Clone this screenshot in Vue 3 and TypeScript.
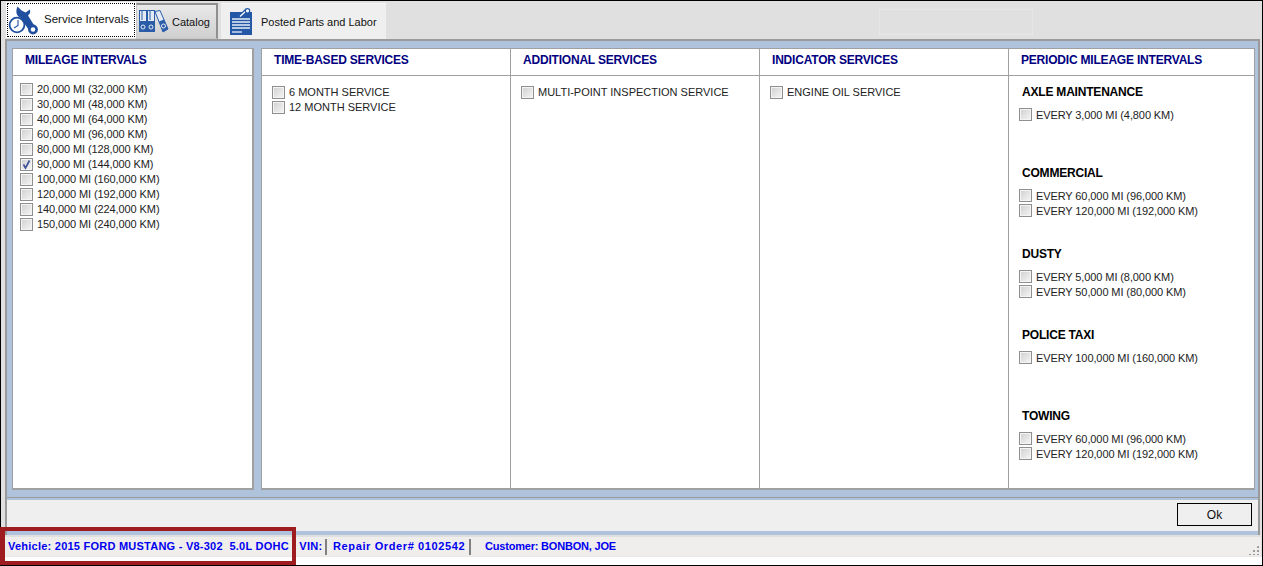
<script setup lang="ts">
interface Group { title: string; rows: string[] }
const mileage: { label: string; checked?: boolean }[] = [
  { label: '20,000 MI (32,000 KM)' },
  { label: '30,000 MI (48,000 KM)' },
  { label: '40,000 MI (64,000 KM)' },
  { label: '60,000 MI (96,000 KM)' },
  { label: '80,000 MI (128,000 KM)' },
  { label: '90,000 MI (144,000 KM)', checked: true },
  { label: '100,000 MI (160,000 KM)' },
  { label: '120,000 MI (192,000 KM)' },
  { label: '140,000 MI (224,000 KM)' },
  { label: '150,000 MI (240,000 KM)' },
]
const columns: { title: string; rows: string[] }[] = [
  { title: 'TIME-BASED SERVICES', rows: ['6 MONTH SERVICE', '12 MONTH SERVICE'] },
  { title: 'ADDITIONAL SERVICES', rows: ['MULTI-POINT INSPECTION SERVICE'] },
  { title: 'INDICATOR SERVICES', rows: ['ENGINE OIL SERVICE'] },
]
const groups: Group[] = [
  { title: 'AXLE MAINTENANCE', rows: ['EVERY 3,000 MI (4,800 KM)'] },
  { title: 'COMMERCIAL', rows: ['EVERY 60,000 MI (96,000 KM)', 'EVERY 120,000 MI (192,000 KM)'] },
  { title: 'DUSTY', rows: ['EVERY 5,000 MI (8,000 KM)', 'EVERY 50,000 MI (80,000 KM)'] },
  { title: 'POLICE TAXI', rows: ['EVERY 100,000 MI (160,000 KM)'] },
  { title: 'TOWING', rows: ['EVERY 60,000 MI (96,000 KM)', 'EVERY 120,000 MI (192,000 KM)'] },
]
const vehicle = 'Vehicle: 2015 FORD MUSTANG - V8-302  5.0L DOHC - VIN:'
</script>

<template>
  <div class="window">
    <div class="tabbar">
      <div class="tab tab-active">
        <div class="focus">
          <svg class="ico" width="32" height="32" viewBox="0 0 32 32">
            <path d="M9.5 2.5 C7 8 9 12.5 12.5 13.5 L20.5 25.5 L26.5 22 L20 11.5 C22 10 22.5 8 22 5.5 L17.5 8.5 L13.5 6.5 Z" fill="#1f4f9e" />
            <circle cx="25" cy="25.5" r="3.6" fill="#fff" stroke="#1f4f9e" stroke-width="2.6" />
            <circle cx="9" cy="21" r="7.4" fill="#fff" stroke="#1f4f9e" stroke-width="1.8" />
            <path d="M10 16 V21.5 L6 24" fill="none" stroke="#1f4f9e" stroke-width="1.1" />
          </svg>
          <span class="tab-text service-text">Service Intervals</span>
        </div>
      </div>
      <div class="tab tab-catalog">
        <svg class="ico" width="30" height="23" viewBox="0 0 30 23">
          <g fill="#e4ebf5" stroke="#2a5ca8" stroke-width="1">
            <rect x="0.5" y="0.5" width="7" height="21" />
            <rect x="8.5" y="0.5" width="7" height="21" />
            <path d="M16 1.5 L21 0.5 L29 19 L24 22 Z" />
          </g>
          <rect x="0" y="11" width="8" height="11" fill="#2a5ca8" />
          <rect x="8" y="11" width="8" height="11" fill="#2a5ca8" />
          <path d="M20 11.5 L25 9.5 L29 19 L24 22 Z" fill="#2a5ca8" />
          <path d="M3 1 V10 M11 1 V10" stroke="#2a5ca8" stroke-width="1" />
          <circle cx="4" cy="17" r="2" fill="#2a5ca8" stroke="#e4ebf5" stroke-width="1" />
          <circle cx="12" cy="17" r="2" fill="#2a5ca8" stroke="#e4ebf5" stroke-width="1" />
          <circle cx="24.5" cy="16" r="2" fill="#2a5ca8" stroke="#e4ebf5" stroke-width="1" />
        </svg>
        <span class="tab-text catalog-text">Catalog</span>
      </div>
      <div class="tab tab-posted">
        <svg class="ico" width="23" height="28" viewBox="0 0 23 28">
          <rect x="0" y="4" width="22" height="23" fill="#2458a6" />
          <path d="M9 9.5 L17 1.5" stroke="#2458a6" stroke-width="3.4" />
          <path d="M10 8.5 L17 2" stroke="#fff" stroke-width="1.3" />
          <circle cx="17.5" cy="2.8" r="2.2" fill="#fff" stroke="#2458a6" stroke-width="1.2" />
          <path d="M2 11 H20 M2 14 H20 M2 17 H20 M2 20 H20" stroke="#e8eef8" stroke-width="1.3" />
          <path d="M2 24 H12" stroke="#e8eef8" stroke-width="1.3" />
        </svg>
        <span class="tab-text posted-text">Posted Parts and Labor</span>
      </div>
      <div class="ghost"></div>
    </div>

    <div class="frame">
      <div class="panels">
        <section class="card card-mileage">
          <h2 class="head">MILEAGE INTERVALS</h2>
          <div class="list list-mileage">
            <label v-for="m in mileage" :key="m.label" class="row">
              <span class="box" :class="{ on: m.checked }">
                <svg v-if="m.checked" width="11" height="11" viewBox="0 0 11 11"><path d="M2.5 5.5 L4.5 9 L8.5 1.5" fill="none" stroke="#3b4f9a" stroke-width="1.6" /></svg>
              </span>
              <span>{{ m.label }}</span>
            </label>
          </div>
        </section>
        <section class="card card-services">
          <div v-for="c in columns" :key="c.title" class="col">
            <h2 class="head">{{ c.title }}</h2>
            <div class="list list-col">
              <label v-for="r in c.rows" :key="r" class="row"><span class="box"></span><span>{{ r }}</span></label>
            </div>
          </div>
          <div class="col col-last">
            <h2 class="head">PERIODIC MILEAGE INTERVALS</h2>
            <div class="groups">
              <div v-for="g in groups" :key="g.title" class="group">
                <h3 class="group-title">{{ g.title }}</h3>
                <label v-for="r in g.rows" :key="r" class="row"><span class="box"></span><span>{{ r }}</span></label>
              </div>
            </div>
          </div>
        </section>
      </div>
      <div class="footer">
        <button class="ok" type="button">Ok</button>
      </div>
    </div>

    <div class="status">
      <span class="st st-vehicle">{{ vehicle }}</span>
      <span class="st st-order">Repair Order# 0102542</span>
      <span class="st st-customer">Customer: BONBON, JOE</span>
      <span class="grip"></span>
    </div>
    <div class="bottom"></div>
    <div class="callout"></div>
  </div>
</template>

<style>
html, body { margin: 0; padding: 0; background: #fff; }
</style>

<style scoped>
.window {
  position: relative;
  width: 1263px;
  height: 566px;
  box-sizing: border-box;
  border: 1px solid #000;
  background: #e0e0e0;
  display: flex;
  flex-direction: column;
  font-family: "Liberation Sans", Arial, sans-serif;
  color: #222;
}
.tabbar {
  height: 38px;
  flex: none;
  display: flex;
  align-items: flex-end;
  padding-left: 5px;
  background: #e0e0e0;
}
.tab { box-sizing: border-box; display: flex; align-items: center; flex: none; font-size: 11px; color: #111; white-space: nowrap; }
.tab-active { width: 130px; height: 36px; background: #fff; padding: 1px; margin-bottom: 1px; }
.focus {
  flex: 1; height: 100%; box-sizing: border-box; border: 1px dotted #000;
  display: flex; align-items: center;
}
.service-text { margin-left: 4px; padding-bottom: 2px; font-size: 11.5px; }
.tab-catalog {
  width: 82px; height: 36px;
  border: 2px solid #8f8f8f; border-left: 1px solid #c8c8c8; border-bottom: 1px solid #c8c8c8;
  background: linear-gradient(#e9e9e9, #cfcfcf);
  padding-left: 2px;
}
.catalog-text { margin-left: 3px; }
.tab-posted {
  width: 165px; height: 36px; margin-left: 3px; padding-left: 9px;
  background: #efefef; border-top: 1px solid #f6f6f6;
}
.posted-text { margin-left: 8px; }
.ghost {
  width: 154px; height: 26px; margin: 0 0 4px 493px; box-sizing: border-box;
  border: 1px solid #e7e7e7;
}
.frame {
  flex: none;
  width: 1255px;
  height: 496px;
  margin-left: 4px;
  box-sizing: border-box;
  border: 2px solid #9a9a9a;
  border-bottom: 0;
  background: #afc3dc;
  display: flex;
  flex-direction: column;
}
.panels {
  height: 457px;
  flex: none;
  display: flex;
  gap: 7px;
  padding: 7px 3px 0 5px;
  box-sizing: border-box;
  border-bottom: 1px solid #9a9a9a;
}
.card {
  background: #fff;
  box-sizing: border-box;
  height: 442px;
  border-right: 2px solid #a0a0a0;
  border-bottom: 2px solid #a0a0a0;
  border-left: 1px solid #a0a0a0;
  border-top: 1px solid #a0a0a0;
}
.card-mileage { width: 242px; flex: none; }
.card-services { flex: 1; min-width: 0; display: flex; border-right-width: 1px; }
.col { width: 249px; flex: none; box-sizing: border-box; border-right: 1px solid #a0a0a0; }
.col-last { flex: 1 1 0; width: auto; min-width: 0; border-right: 0; }
.head {
  margin: 0;
  height: 27px;
  box-sizing: border-box;
  border-bottom: 1px solid #a0a0a0;
  padding: 4px 0 0 12px;
  color: #000080;
  font-size: 12px;
  line-height: 14px;
  font-weight: 700;
  letter-spacing: -0.2px;
  white-space: nowrap;
}
.list { display: flex; flex-direction: column; }
.list-mileage { padding: 5px 0 0 7px; }
.list-col { padding: 8px 0 0 10px; }
.row {
  display: flex; align-items: center; height: 15px; gap: 4px; white-space: nowrap;
  font-size: 11px; letter-spacing: -0.1px;
}
.list-col .row { letter-spacing: 0; }
.box {
  width: 13px; height: 13px; flex: none; box-sizing: border-box;
  border: 1px solid #8e8f8f;
  background: linear-gradient(135deg, #cfcfcf, #f6f6f6);
  box-shadow: inset 0 0 0 1px #f4f4f4;
  display: flex; align-items: center; justify-content: center;
}
.list .box { margin-top: 2px; }
.groups { padding: 9px 0 0 10px; }
.group { height: 81px; }
.group-title {
  margin: 0 0 7px;
  font-size: 12px;
  line-height: 15px;
  font-weight: 700;
  color: #000;
  letter-spacing: -0.2px;
  padding-left: 3px;
}
.footer {
  flex: 1;
  margin-top: 2px;
  margin-bottom: 4px;
  background: #efefef;
  display: flex;
  justify-content: flex-end;
  align-items: flex-start;
  padding: 3px 6px 0 0;
  box-sizing: border-box;
}
.ok {
  width: 75px; height: 23px; box-sizing: border-box;
  border: 1px solid #000;
  background: #efefef;
  font-family: "Liberation Sans", Arial, sans-serif;
  font-size: 12px; color: #111; padding: 0;
}
.status {
  flex: none;
  margin-top: 2px;
  margin-right: 1px;
  height: 19px;
  background: #f0eded;
  border-bottom: 1px solid #e8e8e8;
  display: flex;
  align-items: center;
  color: #0000f0;
  font-weight: 700;
  font-size: 11px;
  white-space: pre;
  position: relative;
}
.st { display: block; height: 16px; line-height: 14px; box-sizing: border-box; }
.st-vehicle { padding-left: 7px; width: 326px; border-right: 2px solid #808080; letter-spacing: 0.24px; }
.st-order { padding-left: 6px; width: 144px; border-right: 2px solid #808080; letter-spacing: 0.62px; }
.st-customer { padding-left: 14px; letter-spacing: -0.2px; }
.grip {
  position: absolute; right: 2px; bottom: 1px; width: 11px; height: 10px;
  background-image: radial-gradient(circle, #9a9a9a 1px, transparent 1px);
  background-size: 4px 4px;
  clip-path: polygon(100% 0, 100% 100%, 0 100%);
}
.bottom { flex: 1; background: #fff; }
.callout {
  position: absolute;
  left: -1px; top: 526px;
  width: 296px; height: 38px;
  box-sizing: border-box;
  border: 4px solid #9e1b20;
  border-left-width: 5px;
  pointer-events: none;
}
</style>
